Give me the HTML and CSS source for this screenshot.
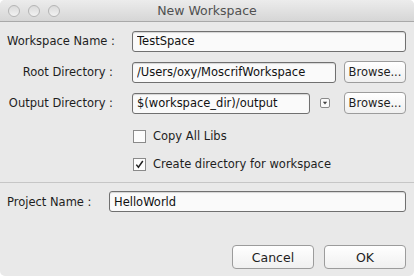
FILE: index.html
```html
<!DOCTYPE html>
<html lang="en">
<head>
    <meta charset="UTF-8">
    <title>New Workspace</title>
    <link rel="stylesheet" href="styles.css">
</head>
<body>
    <div class="window">
        <div class="titlebar">
            <div class="lights">
                <span class="light"></span>
                <span class="light"></span>
                <span class="light"></span>
            </div>
            <div class="title">New Workspace</div>
        </div>

        <div class="fields">
            <div class="row">
                <label class="label">Workspace Name :</label>
                <input class="field" type="text" value="TestSpace">
            </div>
            <div class="row">
                <label class="label">Root Directory :</label>
                <input class="field" type="text" value="/Users/oxy/MoscrifWorkspace">
                <button class="btn browse">Browse...</button>
            </div>
            <div class="row">
                <label class="label">Output Directory :</label>
                <input class="field" type="text" value="$(workspace_dir)/output">
                <span class="dropdown">
                    <svg width="10" height="10" viewBox="0 0 10 10">
                        <rect x="0.5" y="0.5" width="9" height="9" rx="1.5" fill="#fafafa" stroke="#8a8a8a"/>
                        <path d="M2.8 3.8 L7.2 3.8 L5 6.6 Z" fill="#444"/>
                    </svg>
                </span>
                <button class="btn browse">Browse...</button>
            </div>
        </div>

        <div class="checks">
            <div class="check">
                <span class="box"></span>
                <span>Copy All Libs</span>
            </div>
            <div class="check">
                <span class="box">
                    <svg width="11" height="11" viewBox="0 0 11 11">
                        <path d="M2.3 5.6 L4.4 8.2 L8.8 2" fill="none" stroke="#222" stroke-width="1.5"/>
                    </svg>
                </span>
                <span>Create directory for workspace</span>
            </div>
        </div>

        <div class="project">
            <label class="project-label">Project Name :</label>
            <input class="field" type="text" value="HelloWorld">
        </div>

        <div class="actions">
            <button class="btn action">Cancel</button>
            <button class="btn action">OK</button>
        </div>
    </div>
</body>
</html>
```

FILE: styles.css
```css
html, body {
    margin: 0;
    padding: 0;
    background-color: #ffffff;
}

body {
    font-family: "DejaVu Sans", Verdana, sans-serif;
    font-size: 11.5px;
    color: #1e1e1e;
}

.window {
    width: 414px;
    height: 276px;
    background-color: #e9e9e9;
    border-radius: 5px;
    overflow: hidden;
}

.titlebar {
    height: 21px;
    border-bottom: 1px solid #a9a9a9;
    background: linear-gradient(#ececec, #d6d6d6);
    display: flex;
    align-items: center;
    position: relative;
}

.lights {
    display: flex;
    gap: 8px;
    padding-left: 8px;
}

.light {
    width: 10px;
    height: 10px;
    border-radius: 50%;
    border: 1px solid #b4b4b4;
    background: linear-gradient(#dadada, #f2f2f2);
}

.title {
    position: absolute;
    left: 0;
    right: 0;
    text-align: center;
    font-size: 12.5px;
    color: #505050;
}

.fields {
    display: flex;
    flex-direction: column;
    gap: 9px;
    padding-top: 8px;
}

.row {
    display: flex;
    align-items: center;
    height: 22px;
    padding-right: 8px;
}

.label {
    width: 106px;
    padding-left: 7px;
    margin-right: 19px;
    text-align: right;
    white-space: nowrap;
}

.field {
    flex: 1;
    min-width: 0;
    height: 21px;
    box-sizing: border-box;
    border: 1px solid #707070;
    border-radius: 3px;
    background-color: #fafafa;
    padding: 0 4px;
    font-family: inherit;
    font-size: 11.5px;
    color: #111;
    box-shadow: inset 0 1px 1px rgba(0,0,0,0.15);
}

.btn {
    box-sizing: border-box;
    border: 1px solid #9c9c9c;
    border-radius: 4px;
    background: linear-gradient(#ffffff, #f0f0f0);
    font-family: inherit;
    font-size: 11.5px;
    color: #1e1e1e;
    padding: 0;
}

.browse {
    width: 62px;
    height: 22px;
    margin-left: 8px;
}

.dropdown {
    display: flex;
    margin-left: 10px;
    margin-right: 6px;
}

.dropdown svg {
    display: block;
}

.checks {
    display: flex;
    flex-direction: column;
    gap: 14px;
    padding-left: 133px;
    padding-top: 15px;
}

.check {
    display: flex;
    align-items: center;
    gap: 7px;
    height: 14px;
}

.box {
    width: 11px;
    height: 11px;
    border: 1px solid #8a8a8a;
    background-color: #fcfcfc;
    display: flex;
}

.project {
    margin-top: 11px;
    border-top: 1px solid #c6c6c6;
    display: flex;
    align-items: center;
    padding: 8px 8px 0 7px;
}

.project-label {
    width: 84px;
    margin-right: 18px;
    white-space: nowrap;
}

.actions {
    display: flex;
    justify-content: flex-end;
    gap: 10px;
    padding: 33px 8px 0 0;
}

.action {
    width: 82px;
    height: 24px;
    font-size: 12.5px;
}
```
